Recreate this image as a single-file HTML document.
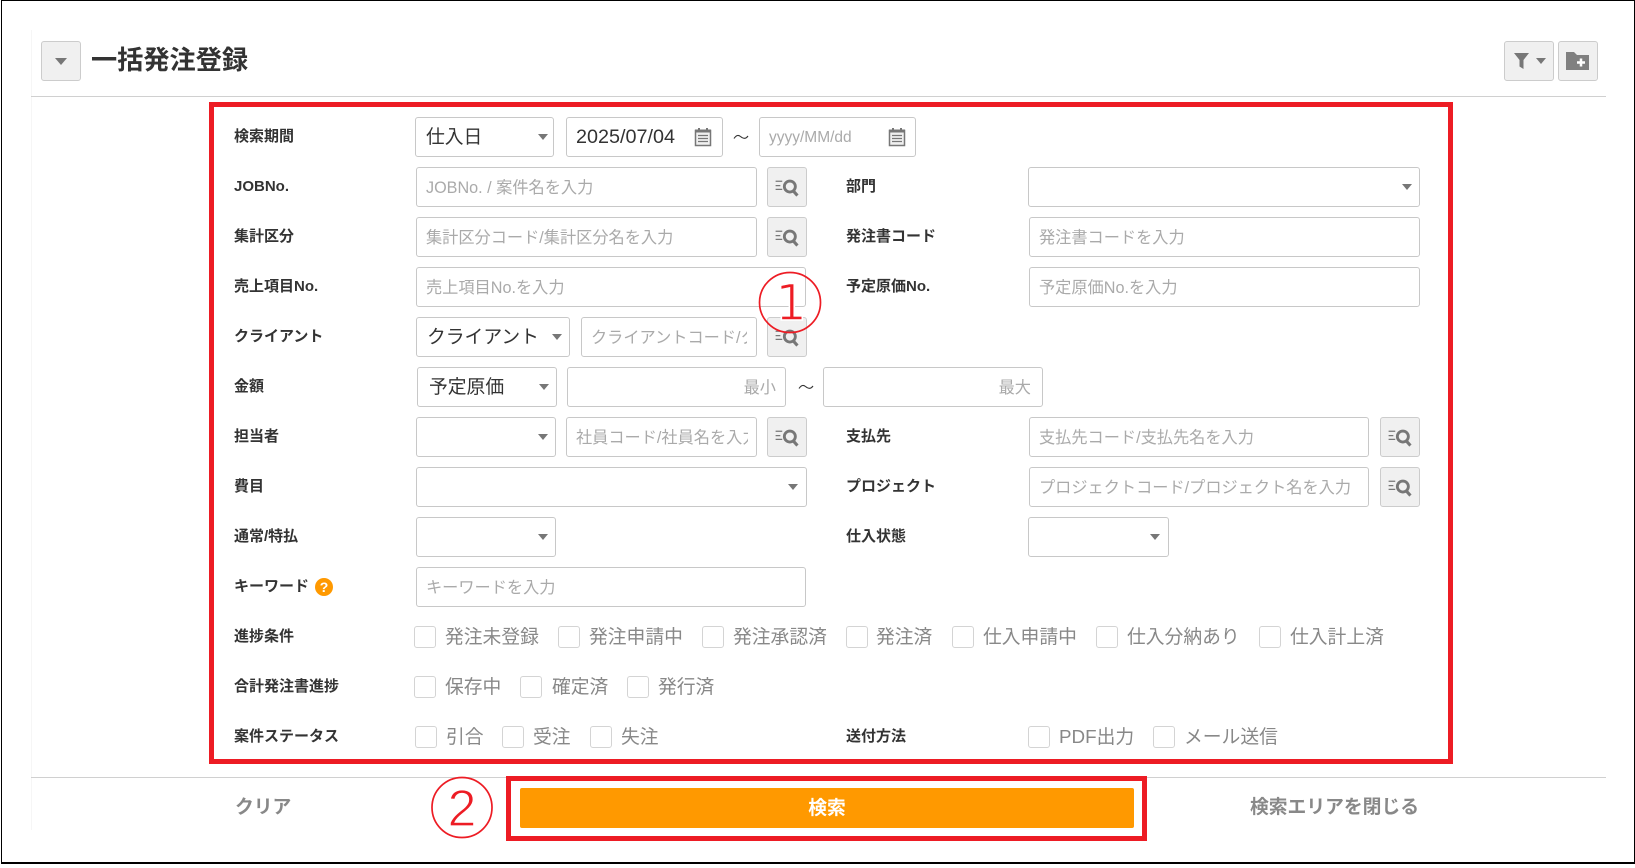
<!DOCTYPE html>
<html lang="ja"><head><meta charset="utf-8"><title>一括発注登録</title>
<style>
html,body{margin:0;padding:0;background:#fff}
body{position:relative;width:1635px;height:868px;overflow:hidden;font-family:"Liberation Sans","Noto Sans CJK JP",sans-serif;color:#333}
#f{position:absolute;left:1px;top:0;width:1632px;height:861px;border:solid #000;border-width:1px 1px 2px 1px;box-sizing:content-box}
.a{position:absolute;box-sizing:border-box}
.l{position:absolute;font-size:15px;font-weight:700;line-height:20px;white-space:nowrap;color:#333}
.i,.s{position:absolute;box-sizing:border-box;height:40px;border:1px solid #c8c8c8;border-radius:3px;background:#fff;overflow:hidden;white-space:nowrap;line-height:38px}
.i{font-size:16.2px;color:#aaa;padding-left:9px;line-height:40px}
.s{font-size:18.8px;color:#333;padding-left:10px}
.c{position:absolute;width:0;height:0;border-left:5px solid transparent;border-right:5px solid transparent;border-top:6px solid #777}
.b{position:absolute;box-sizing:border-box;height:40px;width:40px;border:1px solid #ccc;border-radius:3px;background:#f0f0f0}
.b svg{position:absolute;left:0;top:0}
.k{position:absolute;box-sizing:border-box;width:22px;height:22px;border:1px solid #d4d4d4;border-radius:3px;background:#fff}
.t{position:absolute;font-size:18.8px;color:#888;line-height:24px;white-space:nowrap}
.w{position:absolute;font-size:18.8px;font-weight:700;color:#888;line-height:24px;white-space:nowrap}
.r{position:absolute;box-sizing:border-box;border:5px solid #ed1c24;z-index:5}
</style></head><body>
<svg width="0" height="0" style="position:absolute"><defs>
<symbol id="q" viewBox="0 0 40 40"><path d="M8 14h7M8 18.500h5M8 22.500h7" stroke="#777" stroke-width="1.300" fill="none"/><circle cx="23" cy="19.500" r="5.800" stroke="#777" stroke-width="3" fill="none"/><path d="M26.500 24l4.500 5" stroke="#777" stroke-width="3.200" fill="none"/></symbol>
<symbol id="d" viewBox="0 0 20 20"><path d="M2.500 3.500h15v15h-15z" fill="#f0f0f0" stroke="#777" stroke-width="1.500"/><path d="M2 2.500h16v3H2z" fill="#777"/><path d="M6 1v3M14 1v3" stroke="#777" stroke-width="2"/><path d="M5 8.500h10M5 11.500h10M5 14.500h10" stroke="#777" stroke-width="1.200"/></symbol>
<symbol id="w" viewBox="0 0 16 8"><path d="M1 5.500C3 2.500 5 1.500 7.500 3.500S12.500 6.500 15 3" stroke="#333" stroke-width="1.100" fill="none"/></symbol>
</defs></svg>
<div id="f"></div>
<div class="a" style="left:31px;top:30px;width:1px;height:800px;background:#f6f6f6"></div>

<div class="b" style="left:41px;top:41px"></div><div class="c" style="left:55px;top:58px;border-left-width:6px;border-right-width:6px;border-top-width:7px"></div>
<div class="a" style="left:91px;top:41px;font-size:26.200px;font-weight:700;line-height:38px;color:#333;white-space:nowrap">一括発注登録</div>
<div class="b" style="left:1504px;top:41px;width:50px"></div>
<svg class="a" style="left:1512px;top:50px" width="20" height="22" viewBox="0 0 20 22"><path d="M2 3h15l-5.500 7v9l-4-2.500V10z" fill="#777"/></svg>
<div class="c" style="left:1536px;top:58px"></div>
<div class="b" style="left:1558px;top:41px"></div>
<svg class="a" style="left:1564px;top:50px" width="28" height="24" viewBox="0 0 28 24"><path d="M2 2h8l3 3h12v15H2z" fill="#808080"/><path d="M17 8.500v8M13 12.500h8" stroke="#fff" stroke-width="2.500"/></svg>
<div class="a" style="left:31px;top:96px;width:1575px;height:1px;background:#d0d0d0"></div>

<div class="r" style="left:209px;top:102px;width:1244px;height:662px"></div>

<!-- row 0 -->
<div class="l" style="left:234px;top:127px">検索期間</div>
<div class="s" style="left:415px;top:117px;width:139px">仕入日</div><div class="c" style="left:538px;top:134px"></div>
<div class="s" style="left:566px;top:117px;width:157px;padding-left:9px;font-size:19.8px">2025/07/04</div>
<svg class="a" style="left:693px;top:127px" width="20" height="20"><use href="#d"/></svg>
<svg class="a" style="left:733px;top:133px" width="16" height="8"><use href="#w"/></svg>
<div class="i" style="left:759px;top:117px;width:157px;font-size:15.500px">yyyy/MM/dd</div>
<svg class="a" style="left:887px;top:127px" width="20" height="20"><use href="#d"/></svg>

<!-- row 1 -->
<div class="l" style="left:234px;top:177px">JOBNo.</div>
<div class="i" style="left:416px;top:167px;width:341px">JOBNo. / 案件名を入力</div>
<div class="b" style="left:767px;top:167px"><svg width="38" height="38"><use href="#q"/></svg></div>
<div class="l" style="left:846px;top:177px">部門</div>
<div class="s" style="left:1028px;top:167px;width:392px"></div><div class="c" style="left:1402px;top:184px"></div>

<!-- row 2 -->
<div class="l" style="left:234px;top:227px">集計区分</div>
<div class="i" style="left:416px;top:217px;width:341px">集計区分コード/集計区分名を入力</div>
<div class="b" style="left:767px;top:217px"><svg width="38" height="38"><use href="#q"/></svg></div>
<div class="l" style="left:846px;top:227px">発注書コード</div>
<div class="i" style="left:1029px;top:217px;width:391px">発注書コードを入力</div>

<!-- row 3 -->
<div class="l" style="left:234px;top:277px">売上項目No.</div>
<div class="i" style="left:416px;top:267px;width:390px">売上項目No.を入力</div>
<div class="l" style="left:846px;top:277px">予定原価No.</div>
<div class="i" style="left:1029px;top:267px;width:391px">予定原価No.を入力</div>

<!-- row 4 -->
<div class="l" style="left:234px;top:327px">クライアント</div>
<div class="s" style="left:416px;top:317px;width:154px">クライアント</div><div class="c" style="left:552px;top:334px"></div>
<div class="i" style="left:581px;top:317px;width:176px"><div style="width:156px;overflow:hidden">クライアントコード/クライアント名を入力</div></div>
<div class="b" style="left:767px;top:317px"><svg width="38" height="38"><use href="#q"/></svg></div>

<!-- row 5 -->
<div class="l" style="left:234px;top:377px">金額</div>
<div class="s" style="left:417px;top:367px;width:140px;padding-left:11px">予定原価</div><div class="c" style="left:539px;top:384px"></div>
<div class="i" style="left:567px;top:367px;width:219px;text-align:right;padding-right:9px">最小</div>
<svg class="a" style="left:798px;top:383px" width="16" height="8"><use href="#w"/></svg>
<div class="i" style="left:823px;top:367px;width:220px;text-align:right;padding-right:11px">最大</div>

<!-- row 6 -->
<div class="l" style="left:234px;top:427px">担当者</div>
<div class="s" style="left:416px;top:417px;width:140px"></div><div class="c" style="left:538px;top:434px"></div>
<div class="i" style="left:566px;top:417px;width:191px"><div style="width:172px;overflow:hidden">社員コード/社員名を入力</div></div>
<div class="b" style="left:767px;top:417px"><svg width="38" height="38"><use href="#q"/></svg></div>
<div class="l" style="left:846px;top:427px">支払先</div>
<div class="i" style="left:1029px;top:417px;width:340px">支払先コード/支払先名を入力</div>
<div class="b" style="left:1380px;top:417px"><svg width="38" height="38"><use href="#q"/></svg></div>

<!-- row 7 -->
<div class="l" style="left:234px;top:477px">費目</div>
<div class="s" style="left:416px;top:467px;width:391px"></div><div class="c" style="left:788px;top:484px"></div>
<div class="l" style="left:846px;top:477px">プロジェクト</div>
<div class="i" style="left:1029px;top:467px;width:340px">プロジェクトコード/プロジェクト名を入力</div>
<div class="b" style="left:1380px;top:467px"><svg width="38" height="38"><use href="#q"/></svg></div>

<!-- row 8 -->
<div class="l" style="left:234px;top:527px">通常/特払</div>
<div class="s" style="left:416px;top:517px;width:140px"></div><div class="c" style="left:538px;top:534px"></div>
<div class="l" style="left:846px;top:527px">仕入状態</div>
<div class="s" style="left:1028px;top:517px;width:141px"></div><div class="c" style="left:1150px;top:534px"></div>

<!-- row 9 -->
<div class="l" style="left:234px;top:577px">キーワード</div>
<svg class="a" style="left:314px;top:577px" width="20" height="20" viewBox="0 0 20 20"><circle cx="10" cy="10" r="9" fill="#f90"/><text x="10" y="15" text-anchor="middle" font-size="14" font-weight="700" fill="#fff" font-family="Liberation Sans">?</text></svg>
<div class="i" style="left:416px;top:567px;width:390px">キーワードを入力</div>

<!-- row 10 -->
<div class="l" style="left:234px;top:627px">進捗条件</div>
<div class="k" style="left:414px;top:626px"></div><div class="t" style="left:445px;top:625px">発注未登録</div>
<div class="k" style="left:558px;top:626px"></div><div class="t" style="left:589px;top:625px">発注申請中</div>
<div class="k" style="left:702px;top:626px"></div><div class="t" style="left:733px;top:625px">発注承認済</div>
<div class="k" style="left:846px;top:626px"></div><div class="t" style="left:876px;top:625px">発注済</div>
<div class="k" style="left:952px;top:626px"></div><div class="t" style="left:983px;top:625px">仕入申請中</div>
<div class="k" style="left:1096px;top:626px"></div><div class="t" style="left:1127px;top:625px">仕入分納あり</div>
<div class="k" style="left:1259px;top:626px"></div><div class="t" style="left:1290px;top:625px">仕入計上済</div>

<!-- row 11 -->
<div class="l" style="left:234px;top:677px">合計発注書進捗</div>
<div class="k" style="left:414px;top:676px"></div><div class="t" style="left:445px;top:675px">保存中</div>
<div class="k" style="left:520px;top:676px"></div><div class="t" style="left:552px;top:675px">確定済</div>
<div class="k" style="left:627px;top:676px"></div><div class="t" style="left:658px;top:675px">発行済</div>

<!-- row 12 -->
<div class="l" style="left:234px;top:727px">案件ステータス</div>
<div class="k" style="left:415px;top:726px"></div><div class="t" style="left:446px;top:725px">引合</div>
<div class="k" style="left:502px;top:726px"></div><div class="t" style="left:533px;top:725px">受注</div>
<div class="k" style="left:590px;top:726px"></div><div class="t" style="left:621px;top:725px">失注</div>
<div class="l" style="left:846px;top:727px">送付方法</div>
<div class="k" style="left:1028px;top:726px"></div><div class="t" style="left:1059px;top:725px">PDF出力</div>
<div class="k" style="left:1153px;top:726px"></div><div class="t" style="left:1184px;top:725px">メール送信</div>

<!-- footer -->
<div class="a" style="left:31px;top:777px;width:1575px;height:1px;background:#d0d0d0"></div>
<div class="w" style="left:235px;top:795px">クリア</div>
<div class="w" style="left:1250px;top:795px">検索エリアを閉じる</div>
<div class="r" style="left:506px;top:776px;width:641px;height:65px"></div>
<div class="a" style="left:520px;top:788px;width:614px;height:40px;background:#f90;border-radius:2px;color:#fff;font-size:18.8px;font-weight:700;line-height:40px;text-align:center">検索</div>

<svg class="a" style="left:755px;top:268px;z-index:6" width="70" height="70" viewBox="0 0 70 70"><ellipse cx="35" cy="34.500" rx="30.500" ry="30" fill="none" stroke="#ed1c24" stroke-width="1.700"/><text x="36" y="52" text-anchor="middle" font-size="50" fill="#ed1c24" stroke="#fff" stroke-width="1.600" font-family="DejaVu Sans">1</text></svg>
<svg class="a" style="left:427px;top:773px;z-index:6" width="70" height="70" viewBox="0 0 70 70"><ellipse cx="35" cy="34.500" rx="30" ry="30" fill="none" stroke="#ed1c24" stroke-width="1.700"/><text x="35" y="53" text-anchor="middle" font-size="52" fill="#ed1c24" stroke="#fff" stroke-width="1.200" font-family="Liberation Sans">2</text></svg>
</body></html>
